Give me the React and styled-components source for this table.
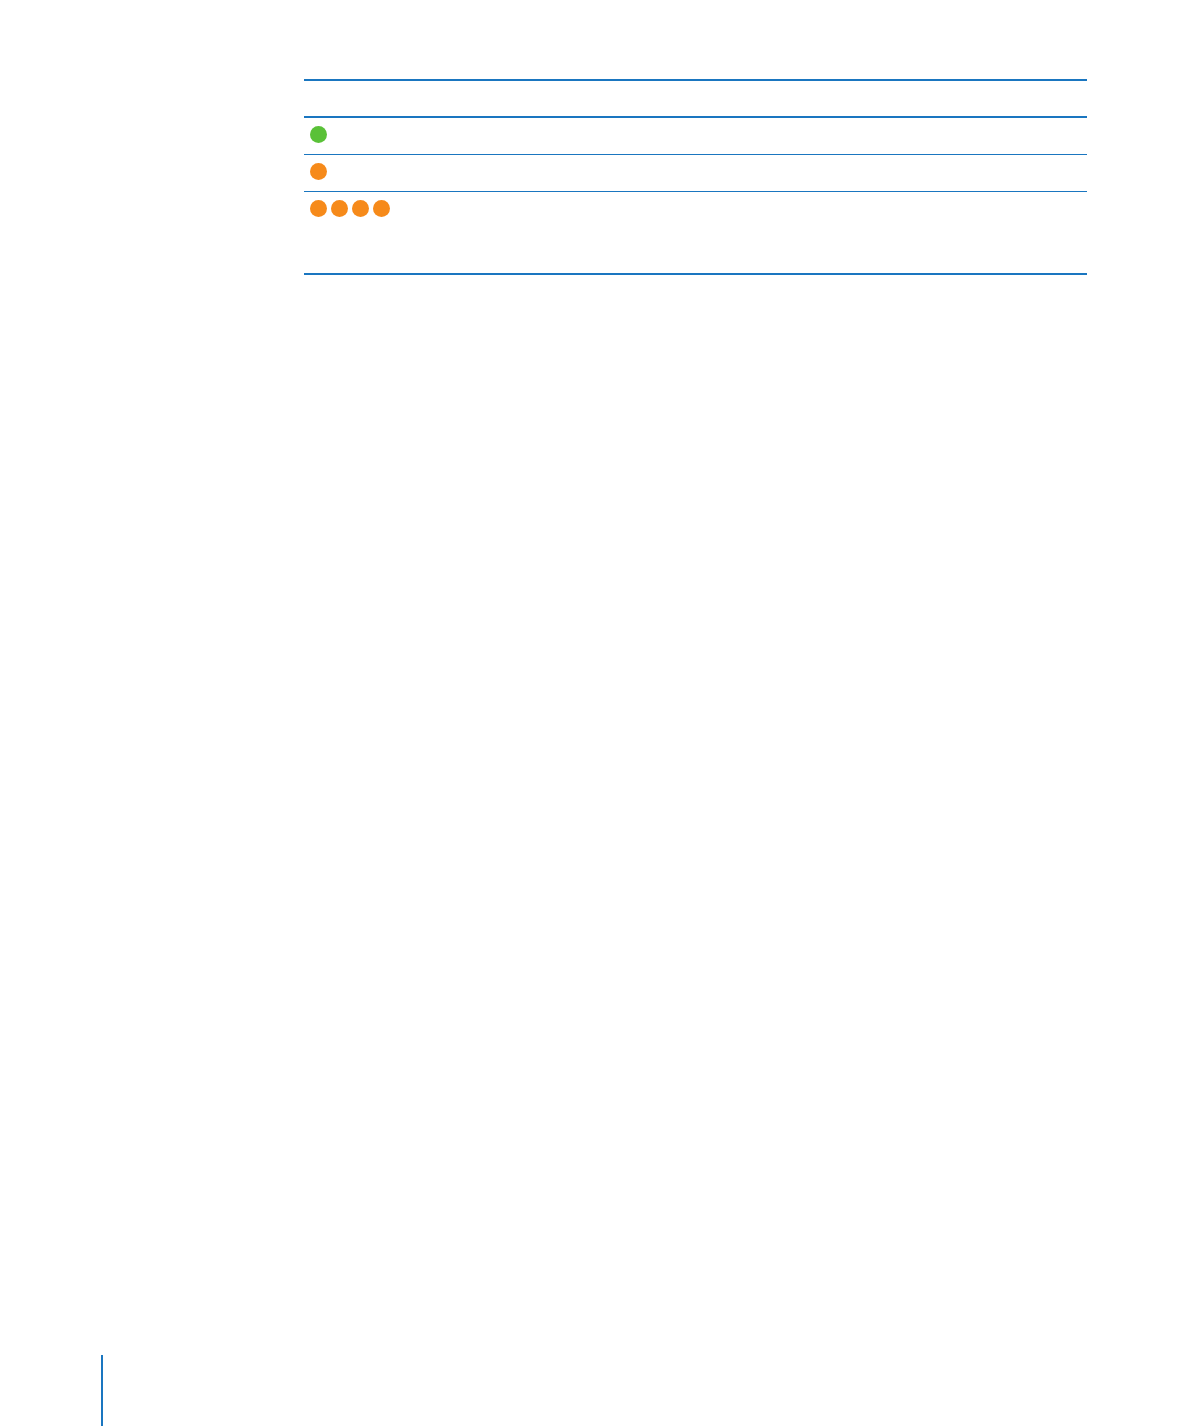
import React from "react";
import styled, { createGlobalStyle } from "styled-components";

const Global = createGlobalStyle`
  html, body { margin: 0; padding: 0; background: #ffffff; }
  body { font-family: "Liberation Sans", Arial, sans-serif; }
`;

const BLUE = "#1a76c0";

const Page = styled.div`
  height: 1426px;
  display: flex;
  flex-direction: column;
  padding-top: 79px;
  box-sizing: border-box;
`;

const Table = styled.div`
  margin-left: 304px;
  width: 783px;
  border-top: 2px solid ${BLUE};
  border-bottom: 2px solid ${BLUE};
  display: flex;
  flex-direction: column;
`;

const HeaderRow = styled.div`
  height: 35px;
  border-bottom: 2px solid ${BLUE};
`;

const Row = styled.div`
  height: ${(p) => p.$h}px;
  box-sizing: border-box;
  padding: 8px 6px 0;
  display: flex;
  align-items: flex-start;
  gap: 4px;
  border-bottom: ${(p) => (p.$last ? "none" : `1px solid ${BLUE}`)};
`;

const Dot = styled.span`
  width: 17px;
  height: 17px;
  border-radius: 50%;
  background: ${(p) => (p.$green ? "#5ac138" : "#f68a1a")};
  flex: none;
`;

const Spacer = styled.div`
  flex: 1;
`;

const SideRule = styled.div`
  margin-left: 101px;
  width: 2px;
  height: 71px;
  background: ${BLUE};
`;

export default function App() {
  return (
    <>
      <Global />
      <Page>
        <Table>
          <HeaderRow />
          <Row $h={37}>
            <Dot $green />
          </Row>
          <Row $h={37}>
            <Dot />
          </Row>
          <Row $h={81} $last>
            <Dot />
            <Dot />
            <Dot />
            <Dot />
          </Row>
        </Table>
        <Spacer />
        <SideRule />
      </Page>
    </>
  );
}
